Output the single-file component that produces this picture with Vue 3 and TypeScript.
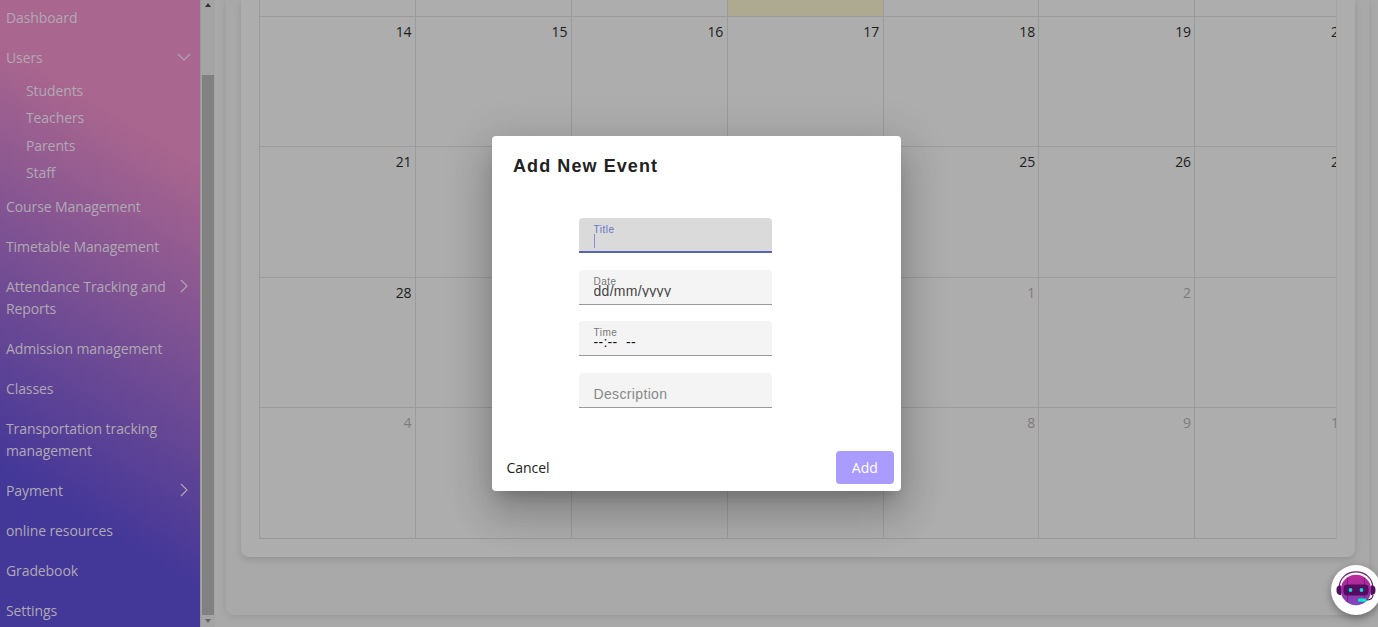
<script setup lang="ts">
interface Item { label: string; icon?: 'down' | 'right'; children?: string[] }
interface Day { n: number; muted?: boolean; today?: boolean }

const items: Item[] = [
  { label: 'Dashboard' },
  { label: 'Users', icon: 'down', children: ['Students', 'Teachers', 'Parents', 'Staff'] },
  { label: 'Course Management' },
  { label: 'Timetable Management' },
  { label: 'Attendance Tracking and Reports', icon: 'right' },
  { label: 'Admission management' },
  { label: 'Classes' },
  { label: 'Transportation tracking management' },
  { label: 'Payment', icon: 'right' },
  { label: 'online resources' },
  { label: 'Gradebook' },
  { label: 'Settings' },
]

// Five visible weeks, starting on the 7th; the last days belong to the next month.
const weeks: Day[][] = Array.from({ length: 5 }, (_, w) =>
  Array.from({ length: 7 }, (_, d) => {
    const v = 7 + w * 7 + d
    return { n: v > 31 ? v - 31 : v, muted: v > 31, today: v === 10 }
  }),
)
</script>

<template>
  <div class="page">
    <nav class="side">
      <div v-for="it in items" :key="it.label" class="group">
        <div class="item">
          <span class="label">{{ it.label }}</span>
          <svg v-if="it.icon" class="chev" width="14" height="14" viewBox="0 0 14 14">
            <path :d="it.icon === 'down' ? 'M1 4 L7 10 L13 4' : 'M4 1 L10 7 L4 13'" />
          </svg>
        </div>
        <div v-if="it.children" class="subs">
          <div v-for="c in it.children" :key="c" class="sub">{{ c }}</div>
        </div>
      </div>
    </nav>
    <div class="scroll">
      <svg class="arrow" width="8" height="4" viewBox="0 0 8 4"><path d="M4 0 L7 4 H1Z" fill="#333" /></svg>
      <div class="thumb"></div>
      <svg class="arrow" width="8" height="4" viewBox="0 0 8 4"><path d="M1 0 H7 L4 4Z" fill="#666" /></svg>
    </div>
    <main class="main">
      <section class="outer">
        <section class="card">
          <div class="cal">
            <div v-for="(w, i) in weeks" :key="i" class="week">
              <div v-for="(d, j) in w" :key="j" class="day" :class="{ muted: d.muted, today: d.today }">
                <span v-if="i > 0">{{ d.n }}</span>
              </div>
            </div>
          </div>
        </section>
      </section>
    </main>

    <div class="dialog">
      <h2>Add New Event</h2>
      <div class="fields">
        <div class="field focus"><span class="cap">Title</span><span class="caret"></span></div>
        <div class="field"><span class="cap">Date</span><span class="val">dd/mm/yyyy</span></div>
        <div class="field"><span class="cap">Time</span><span class="val time">--:--&nbsp; --</span></div>
        <div class="field"><span class="hint">Description</span></div>
      </div>
      <div class="actions">
        <button class="cancel">Cancel</button>
        <button class="add">Add</button>
      </div>
    </div>

    <div class="bot">
      <svg width="40" height="40" viewBox="0 0 40 40">
        <defs>
          <linearGradient id="face" x1="0" y1="0" x2="0" y2="1">
            <stop offset="0" stop-color="#bd2a9a" /><stop offset=".5" stop-color="#9c2d9c" /><stop offset="1" stop-color="#7a4bc0" />
          </linearGradient>
        </defs>
        <path d="M3 18 C4 -3.500 36 -3.500 37 18" fill="none" stroke="#6b1a72" stroke-width="1.2" />
        <circle cx="20" cy="20" r="15.300" fill="url(#face)" />
        <path d="M11.500 8V32M28.500 8V32" stroke="#7a1681" stroke-width=".8" />
        <path d="M5 15.500 C1 15.500 .5 17.500 .5 20 S1 25 5 25Z M35 15.500 C39 15.500 39.500 17.500 39.500 20 S39 25 35 25Z" fill="#540b62" />
        <rect x="7.500" y="14.500" width="25" height="11" rx="4" fill="#540b62" />
        <circle cx="14.500" cy="20" r="1.900" fill="#12dccb" />
        <circle cx="25.500" cy="20" r="1.900" fill="#12dccb" />
        <path d="M37 25 C37 29 34 30 30 30" fill="none" stroke="#540b62" stroke-width="1.1" />
        <rect x="22" y="28.500" width="8.500" height="3.200" rx="1" fill="#00f0d0" />
      </svg>
    </div>
  </div>
</template>

<style>
body { margin: 0; overflow: hidden; }
</style>
<style scoped>
.page { position: relative; display: flex; width: 1378px; height: 627px; overflow: hidden; background: #a9a9a9; font-family: "Open Sans", "Noto Sans", sans-serif; }
.side { box-sizing: border-box; width: 200px; height: 627px; flex: none; overflow: hidden; padding-top: 7px; background: linear-gradient(211deg, #a9668e 0, #a9668e 22%, #433798 79%, #433798 100%); color: #b0a9b4; font-size: 14px; line-height: 22px; letter-spacing: -.1px; }
.item { display: flex; justify-content: space-between; padding: 0 9px 0 6px; margin-bottom: 18px; }
.label { max-width: 166px; }
.chev { margin-top: 3px; flex: none; fill: none; stroke: currentColor; stroke-width: 1.1; }
.subs { margin-top: -11px; padding: 1px 0 9.500px 26px; }
.sub { height: 27.300px; line-height: 27.300px; }
.scroll { box-sizing: border-box; width: 15px; flex: none; height: 627px; display: flex; flex-direction: column; padding: 3px 1px 4px 1px; background: #a4a4a4; border-left: 1px solid #999; align-items: center; }
.thumb { width: 12px; height: 540px; margin: 68px 0 4px; background: #818181; }
.arrow { flex: none; display: block; }
.main { flex: 1; padding: 0 9px 0 11px; min-width: 0; }
.outer { box-sizing: border-box; height: 615px; padding: 0 14px 0 15px; border-radius: 0 0 8px 8px; background: #a9a9a9; box-shadow: 0 2px 8px rgba(0, 0, 0, .1); }
.card { box-sizing: border-box; height: 557px; padding: 0 18px; border-radius: 0 0 8px 8px; background: #adadad; box-shadow: 0 3px 7px rgba(0, 0, 0, .13); }
.cal { overflow: hidden; height: 539px; border-left: 1px solid #999; box-sizing: border-box; border-bottom: 1px solid #999; border-right: 1px solid #a3a3a3; }
.week { display: grid; grid-template-columns: repeat(7, 155.900px); height: 130.400px; }
.week:first-child { height: 17px; }
.day { box-sizing: border-box; border-right: 1px solid #9b9b9b; border-bottom: 1px solid #9b9b9b; text-align: right; padding: 4px 3.400px 0 0; font-size: 14px; line-height: 22px; letter-spacing: -.1px; color: #1c1c1c; }
.week:last-child .day { border-bottom: 0; }
.day.muted { color: #7c7c7c; }
.today { background: #aeaa91; }
.dialog { position: absolute; left: 491.500px; top: 136px; width: 409.500px; height: 355px; box-sizing: border-box; background: #fff; border-radius: 4px; box-shadow: 0 11px 15px -7px rgba(0, 0, 0, .2), 0 24px 38px 3px rgba(0, 0, 0, .14), 0 9px 46px 8px rgba(0, 0, 0, .12); display: flex; flex-direction: column; font-family: "Liberation Sans", Arial, sans-serif; }
h2 { margin: 18px 0 0 21.500px; font-size: 18px; line-height: 24px; letter-spacing: 1.080px; color: #222; }
.fields { display: flex; flex-direction: column; gap: 16.700px; width: 193px; margin: 40px 0 0 87.500px; }
.field { box-sizing: border-box; height: 35px; padding: 6px 14px 0 14.500px; background: #f4f4f4; border-bottom: 1px solid #999; border-radius: 4px 4px 0 0; letter-spacing: .5px; }
.focus { background: #dadada; border-bottom: 2px solid #5563b8; }
.cap { display: block; font-size: 10px; line-height: 12px; color: #777; }
.focus .cap { color: #6674c4; }
.caret { display: block; width: 1px; height: 14px; margin: -2px 0 0 0; background: #8790cb; }
.val { display: block; height: 12px; margin-top: -3px; overflow: hidden; font-size: 14px; line-height: 12px; color: #444; letter-spacing: .3px; }
.time { color: #111; }
.hint { display: block; margin-top: 7px; font-size: 14px; line-height: 17px; color: #888; letter-spacing: .35px; }
.actions { display: flex; justify-content: space-between; margin: auto 7px 7px; }
button { border: 0; background: none; font: 14px/22px "Open Sans", "Noto Sans", sans-serif; color: #222; height: 33px; padding: 0 8px; letter-spacing: -.05px; }
.add { width: 58.500px; border-radius: 4px; background: #a99bff; color: #fff; }
.bot { position: absolute; left: 1330.500px; top: 565px; width: 50px; height: 50px; border-radius: 50%; background: #fff; box-shadow: 0 3px 8px rgba(0, 0, 0, .35); }
.bot svg { display: block; margin: 5px; }
</style>
